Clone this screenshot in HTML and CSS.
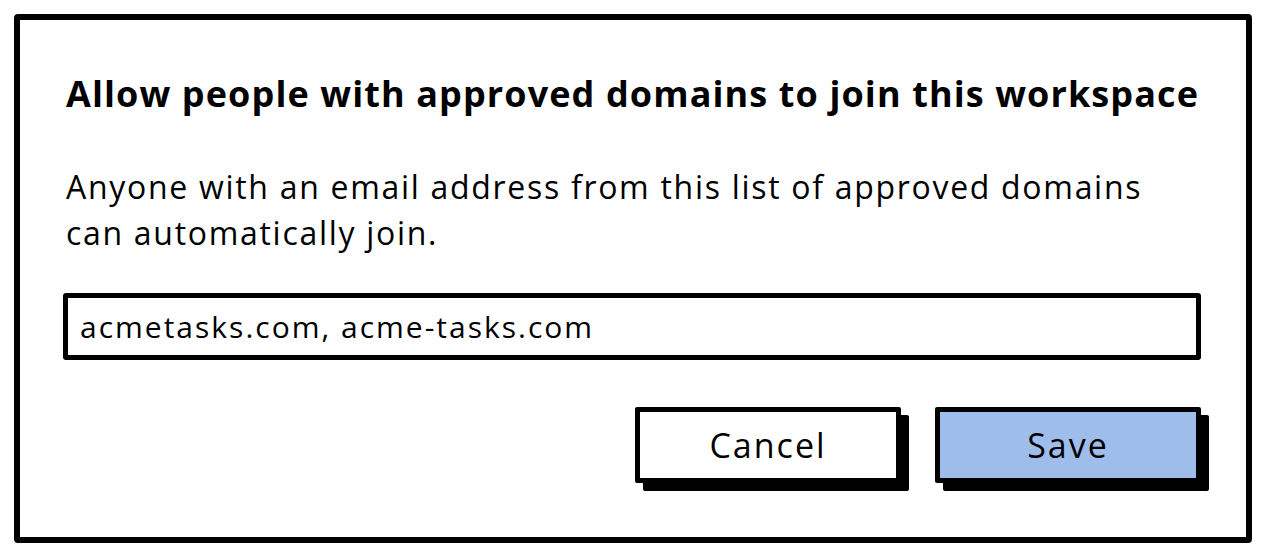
FILE: index.html
```html
<!DOCTYPE html>
<html>
<head>
<meta charset="utf-8">
<link rel="stylesheet" href="styles.css">
</head>
<body>
<div class="frame">
  <h1 class="title">Allow people with approved domains to join this workspace</h1>
  <p class="desc">Anyone with an email address from this list of approved domains<br>can automatically join.</p>
  <div class="input">acmetasks.com, acme-tasks.com</div>
  <div class="actions">
    <button class="btn">Cancel</button>
    <button class="btn primary">Save</button>
  </div>
</div>
</body>
</html>
```
FILE: styles.css
```css
html, body {
  margin: 0;
  padding: 0;
  background: #fff;
}
body {
  font-family: "Open Sans", "Liberation Sans", sans-serif;
  color: #000;
}
.frame {
  box-sizing: border-box;
  margin: 14px 0 0 14px;
  width: 1238px;
  height: 529px;
  border: 6px solid #000;
  border-radius: 4px;
  padding: 54px 45px 0 43px;
  display: flex;
  flex-direction: column;
}
.title {
  margin: 0 0 0 3px;
  font-size: 36px;
  line-height: 40px;
  font-weight: 700;
  letter-spacing: 1.1px;
  white-space: nowrap;
}
.desc {
  margin: 50px 0 0 3px;
  font-size: 32px;
  line-height: 46px;
  font-weight: 400;
  letter-spacing: 1.7px;
  white-space: nowrap;
}
.input {
  box-sizing: border-box;
  margin-top: 37px;
  height: 67px;
  border: 5px solid #000;
  border-radius: 3px;
  padding: 0 0 0 12px;
  display: flex;
  align-items: center;
  font-size: 30px;
  letter-spacing: 2px;
}
.actions {
  margin-top: 47px;
  display: flex;
  justify-content: flex-end;
  gap: 34px;
}
.btn {
  box-sizing: border-box;
  width: 266px;
  height: 76px;
  border: 5px solid #000;
  border-radius: 2px;
  background: #fff;
  box-shadow: 8px 8px 0 #000;
  font-family: inherit;
  font-size: 34px;
  letter-spacing: 2px;
  color: #000;
  padding: 0;
}
.btn.primary {
  background: #9fbdeb;
}
```
